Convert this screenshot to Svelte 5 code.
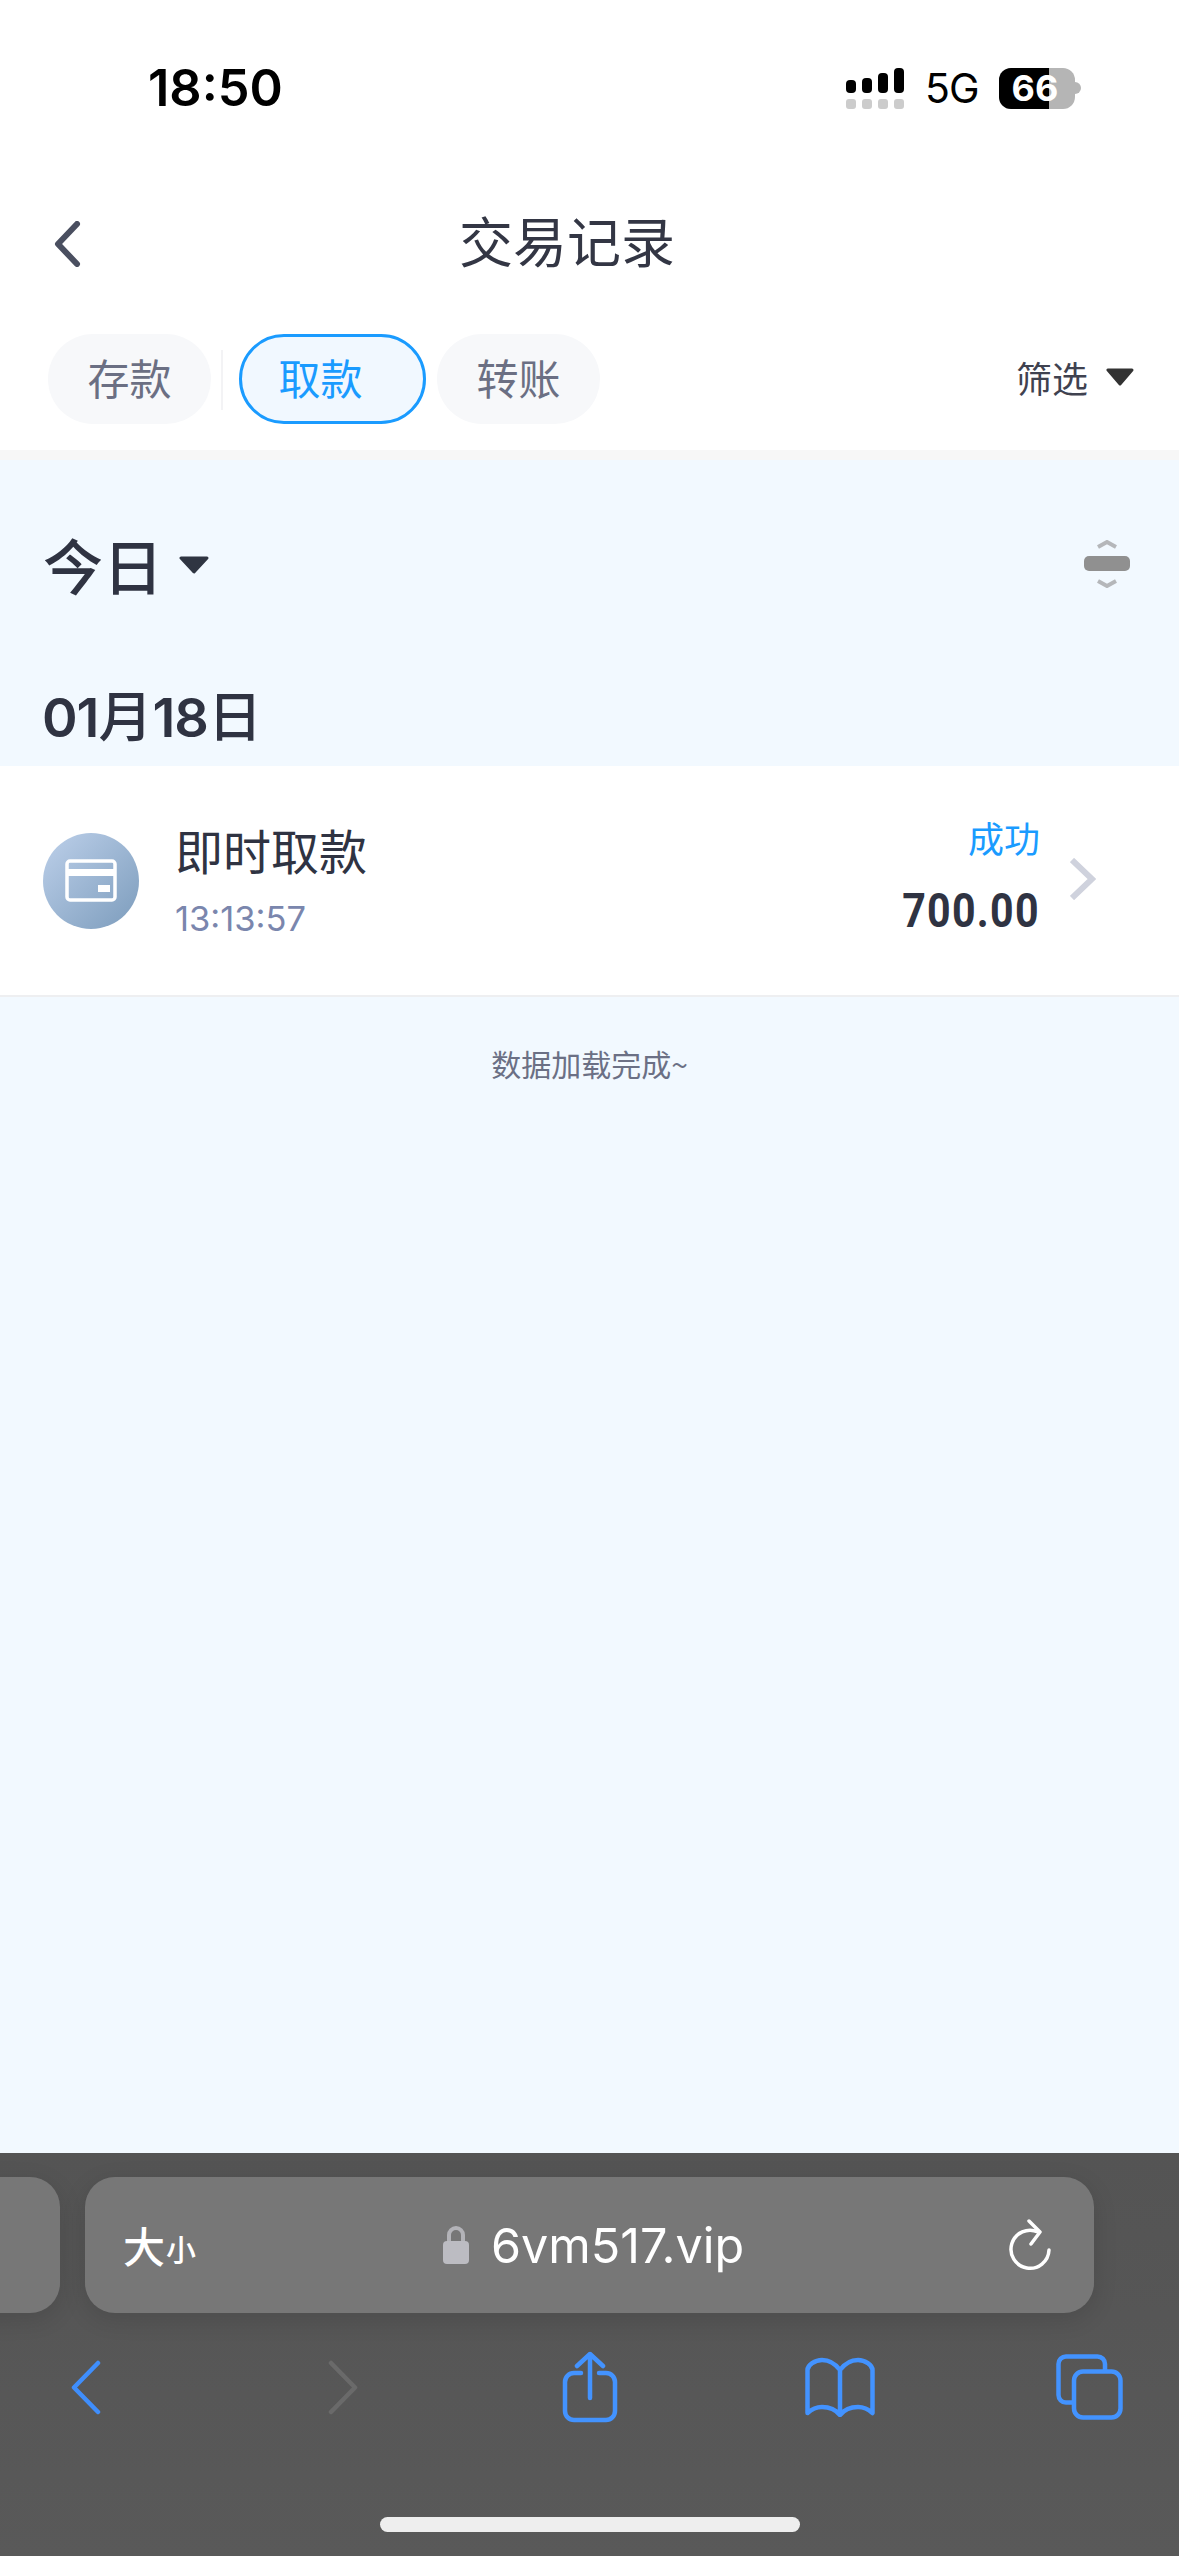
<script>
  const tabs = [
    { label: '存款', active: false },
    { label: '取款', active: true },
    { label: '转账', active: false }
  ];
</script>

<div class="page">
  <header class="status">
    <span class="clock">18:50</span>
    <div class="status-right">
      <svg width="58" height="41" viewBox="0 0 58 41">
        <rect x="0" y="12" width="10" height="13" rx="4" />
        <rect x="16" y="10" width="10" height="15" rx="4" />
        <rect x="32" y="5" width="10" height="20" rx="4" />
        <rect x="48" y="0" width="10" height="25" rx="4" />
        <g fill="#ccc">
          <rect x="0" y="31" width="10" height="10" rx="3" />
          <rect x="16" y="31" width="10" height="10" rx="3" />
          <rect x="32" y="31" width="10" height="10" rx="3" />
          <rect x="48" y="31" width="10" height="10" rx="3" />
        </g>
      </svg>
      <span class="net">5G</span>
      <div class="battery">
        <div class="battery-fill"></div>
        <span class="battery-text">66</span>
      </div>
      <span class="battery-cap"></span>
    </div>
  </header>

  <nav class="title-bar">
    <svg class="back" width="30" height="46" viewBox="0 0 30 46">
      <path d="M25 3 L6 23 L25 43" fill="none" stroke="#4a4f60" stroke-width="6" stroke-linecap="round" stroke-linejoin="round" />
    </svg>
    <h1>交易记录</h1>
  </nav>

  <div class="tabs">
    {#each tabs as tab, i}
      <button class="tab" class:active={tab.active}>{tab.label}</button>
      {#if i === 0}<span class="divider"></span>{/if}
    {/each}
    <div class="filter">
      <span>筛选</span>
      <svg width="28" height="18" viewBox="0 0 28 18"><path d="M2 2 H26 L14 16 Z" fill="#333" stroke="#333" stroke-width="3" stroke-linejoin="round" /></svg>
    </div>
  </div>
  <div class="strip"></div>

  <main class="content">
    <div class="period">
      <div class="period-label">
        <span>今日</span>
        <svg width="30" height="18" viewBox="0 0 30 18"><path d="M2 2 H28 L15 16 Z" fill="#2f3542" stroke="#2f3542" stroke-width="3" stroke-linejoin="round" /></svg>
      </div>
      <svg class="collapse" width="46" height="48" viewBox="0 0 46 48">
        <path d="M14 7 L23 2 L32 7" fill="none" stroke="#b5b7ba" stroke-width="4" />
        <rect x="0" y="16" width="46" height="15" rx="5" fill="#909090" />
        <path d="M14 41 L23 46 L32 41" fill="none" stroke="#b5b7ba" stroke-width="4" />
      </svg>
    </div>

    <h2 class="date"><span class="num">01</span>月<span class="num">18</span>日</h2>

    <section class="row">
      <div class="avatar">
        <svg width="52" height="43" viewBox="0 0 52 43">
          <rect x="2" y="2" width="48" height="39" rx="3" fill="none" stroke="#fff" stroke-width="3.5" />
          <rect x="2" y="10" width="48" height="7" fill="#fff" />
          <rect x="33" y="26" width="12" height="7" fill="#fff" />
        </svg>
      </div>
      <div class="info">
        <div class="name">即时取款</div>
        <div class="time">13:13:57</div>
      </div>
      <div class="result">
        <div class="state">成功</div>
        <div class="amount">700.00</div>
      </div>
      <svg class="chevron" width="26" height="42" viewBox="0 0 26 42">
        <path d="M2 2 L22 21 L2 40" fill="none" stroke="#cfd2dd" stroke-width="6" />
      </svg>
    </section>

    <p class="end">数据加载完成~</p>
  </main>

  <footer class="browser">
    <div class="address-row">
      <div class="prev-tab"></div>
      <div class="address">
        <span class="aa"><b>大</b><small>小</small></span>
        <div class="url">
          <svg width="28" height="40" viewBox="0 0 28 40">
            <path d="M7 18 V10 a7 7 0 0 1 14 0 V18" fill="none" stroke="#b3b3b8" stroke-width="4" />
            <rect x="1" y="16" width="26" height="23" rx="4" fill="#bcbcc2" />
          </svg>
          <span>6vm517.vip</span>
        </div>
        <svg class="reload" width="46" height="54" viewBox="0 0 46 54">
          <path d="M30 13 A19 19 0 1 0 41 31" fill="none" stroke="#fff" stroke-width="3.5" stroke-linecap="round" />
          <path d="M21 2 L32 13 L23 25" fill="none" stroke="#fff" stroke-width="3.5" stroke-linecap="round" stroke-linejoin="round" />
        </svg>
      </div>
    </div>
    <div class="toolbar">
      <svg class="t-back" width="30" height="55" viewBox="0 0 30 55"><path d="M27 3 L3 27.5 L27 52" fill="none" stroke="#3f8efc" stroke-width="4.5" stroke-linecap="round" stroke-linejoin="round" /></svg>
      <svg class="t-forward" width="30" height="55" viewBox="0 0 30 55"><path d="M3 3 L27 27.5 L3 52" fill="none" stroke="#6a6a6a" stroke-width="4.5" stroke-linecap="round" stroke-linejoin="round" /></svg>
      <svg class="t-share" width="56" height="72" viewBox="0 0 56 72">
        <g fill="none" stroke="#4393ff" stroke-width="4.5" stroke-linecap="round" stroke-linejoin="round">
          <path d="M19 22 H12 a9 9 0 0 0 -9 9 V60 a9 9 0 0 0 9 9 H44 a9 9 0 0 0 9 -9 V31 a9 9 0 0 0 -9 -9 H37" />
          <path d="M28 47 V3 M15 15 L28 3 L41 15" />
        </g>
      </svg>
      <svg class="t-book" width="70" height="60" viewBox="0 0 70 60">
        <path d="M35 13 C29 5 22 3 17 3 C10 3 2.5 8 2.5 13 V56 C8 51 13 50 17 50 C24 50 31 53 35 58 C39 53 46 50 53 50 C57 50 62 51 67.5 56 V13 C67.5 8 60 3 53 3 C48 3 41 5 35 13 V58" fill="none" stroke="#4393ff" stroke-width="4.5" stroke-linecap="round" stroke-linejoin="round" />
      </svg>
      <svg class="t-tabs" width="67" height="66" viewBox="0 0 67 66">
        <g fill="none" stroke="#4393ff" stroke-width="4.5" stroke-linejoin="round">
          <path d="M49 17 V10 a7.5 7.5 0 0 0 -7.5 -7.5 H10 a7.5 7.5 0 0 0 -7.5 7.5 V41 a7.5 7.5 0 0 0 7.5 7.5 H18" />
          <rect x="18" y="17.5" width="46.5" height="46" rx="9" />
        </g>
      </svg>
    </div>
    <div class="home"></div>
  </footer>
</div>

<style>
  :global(body) { margin: 0; background: #fff; }
  .page {
    width: 1179px;
    height: 2556px;
    display: flex;
    flex-direction: column;
    font-family: "Noto Sans CJK SC", "Noto Sans", sans-serif;
    color: #2f3342;
    overflow: hidden;
  }
  .status {
    height: 174px;
    flex: none;
    display: flex;
    justify-content: space-between;
    align-items: flex-start;
    padding: 60px 98px 0 148px;
    box-sizing: border-box;
    font-family: Inter, sans-serif;
    color: #000;
  }
  .clock { font-size: 50.5px; font-weight: 600; line-height: 56px; }
  .status-right { display: flex; align-items: center; height: 56px; }
  .net { font-size: 41px; font-weight: 400; line-height: 44px; letter-spacing: -1px; margin: 0 22px 0 21px; width: 52px; white-space: nowrap; }
  .battery {
    position: relative;
    width: 76px;
    height: 41px;
    border-radius: 12px;
    background: #b5b5b5;
  }
  .battery-fill { width: 50px; height: 100%; background: #000; border-radius: 12px 0 0 12px; }
  .battery-text {
    position: absolute;
    top: 0;
    left: 0;
    width: 72px;
    text-align: center;
    color: #fff;
    font-size: 36px;
    font-weight: 700;
    line-height: 41px;
  }
  .battery-cap {
    width: 6px;
    height: 12px;
    border-radius: 0 6px 6px 0;
    background: #b5b5b5;
  }
  .title-bar {
    height: 136px;
    flex: none;
    display: flex;
    align-items: center;
    justify-content: center;
    position: relative;
  }
  .title-bar h1 { margin: 0 45px 5px 0; font-size: 54px; font-weight: 400; line-height: 1; color: #333644; }
  .back { position: absolute; left: 52px; top: 47px; }
  .tabs {
    height: 140px;
    flex: none;
    display: flex;
    align-items: flex-start;
    padding: 24px 44px 0 48px;
    box-sizing: border-box;
  }
  .tab {
    height: 90px;
    width: 163px;
    border: none;
    border-radius: 45px;
    background: #f7f8fa;
    color: #6b6f83;
    font: 400 42px/1 "Noto Sans CJK SC", sans-serif;
    padding: 0 0 4px;
  }
  .tab.active {
    width: 187px;
    margin-right: 11px;
    background: #f1f8ff;
    color: #1a9bff;
    border: 3px solid #1a9bff;
    padding: 0 24px 4px 0;
  }
  .divider { width: 2px; height: 60px; margin: 16px 16px 0 10px; background: #f3f3f5; }
  .filter {
    margin-left: auto;
    display: flex;
    align-items: center;
    gap: 18px;
    height: 90px;
    margin-right: 1px;
    margin-top: -2px;
    font-size: 36px;
    color: #3f4250;
  }
  .strip { height: 10px; flex: none; background: #f7f7f7; }
  .content { flex: 1; min-height: 0; background: #f2f9ff; }
  .period {
    height: 212px;
    display: flex;
    align-items: center;
    justify-content: space-between;
    padding: 0 49px 0 43px;
    box-sizing: border-box;
  }
  .period-label { display: flex; align-items: center; gap: 16px; margin-bottom: 5px; font-size: 60px; font-weight: 500; line-height: 1; }
  .period-label svg { margin-top: 2px; }
  .collapse { margin-bottom: 4px; }
  .date {
    margin: 0;
    height: 94px;
    font-size: 54px;
    font-weight: 500;
    line-height: 84px;
    padding-left: 42px;
    overflow: hidden;
  }
  .num { font-family: Inter, sans-serif; font-weight: 600; letter-spacing: -1px; }
  .row {
    height: 231px;
    background: #fff;
    border-bottom: 2px solid #eeeff1;
    box-sizing: border-box;
    display: flex;
    align-items: center;
    padding: 0 83px 0 43px;
  }
  .avatar {
    width: 96px;
    height: 96px;
    border-radius: 50%;
    background: linear-gradient(135deg, #bdd0ea, #7c9cbc);
    display: flex;
    align-items: center;
    justify-content: center;
    flex: none;
  }
  .info { margin-left: 36px; flex: 1; }
  .name { font-size: 48px; line-height: 62px; margin-top: -3px; color: #2f3342; }
  .time { font-family: Inter, sans-serif; font-size: 34.5px; line-height: 44px; margin-top: 17px; color: #7a86ad; }
  .result { text-align: right; margin-bottom: 7px; }
  .state { font-size: 36px; line-height: 52px; margin-top: -3px; color: #1a9bff; }
  .amount {
    font: 700 49px/60px Roboto, sans-serif;
    margin-top: 18px;
    letter-spacing: 1.5px;
    transform: scaleX(0.84);
    transform-origin: right center;
  }
  .chevron { margin: -4px 0 0 30px; }
  .end { margin: 44px 0 0; text-align: center; font-size: 30px; line-height: 44px; color: #6b7085; }
  .browser {
    height: 403px;
    flex: none;
    background: linear-gradient(#545454, #595959);
    display: flex;
    flex-direction: column;
    position: relative;
  }
  .address-row { display: flex; gap: 25px; margin: 24px 85px 0 -60px; height: 136px; }
  .prev-tab { width: 120px; border-radius: 30px; background: #777; box-shadow: 0 6px 24px rgba(0,0,0,.12); }
  .address {
    flex: 1;
    border-radius: 30px;
    background: #777;
    box-shadow: 0 6px 24px rgba(0,0,0,.12);
    display: flex;
    align-items: center;
    position: relative;
    padding: 0 40px 0 38px;
    color: #fff;
  }
  .aa { font-size: 42px; line-height: 1; display: flex; align-items: flex-end; gap: 1px; }
  .aa b { font-weight: 500; }
  .aa small { font-size: 30px; line-height: 1.2; font-weight: 500; }
  .url {
    position: absolute;
    left: 357px;
    display: flex;
    align-items: center;
    gap: 21px;
    font-family: Inter, sans-serif;
    font-size: 48.5px;
    font-weight: 400;
  }
  .reload { margin-left: auto; margin-top: 2px; }
  .toolbar {
    display: flex;
    align-items: center;
    padding-left: 71px;
    margin-top: 38px;
    height: 72px;
  }
  .t-forward { margin-left: 227px; }
  .t-share { margin-left: 204px; }
  .t-book { margin-left: 187px; }
  .t-tabs { margin-left: 181px; }
  .home {
    position: absolute;
    left: 380px;
    bottom: 24px;
    width: 420px;
    height: 15px;
    border-radius: 8px;
    background: #eee;
  }
</style>
